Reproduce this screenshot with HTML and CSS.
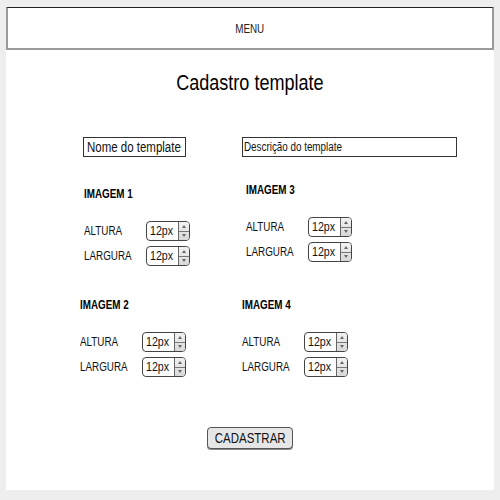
FILE: index.html
```html
<!DOCTYPE html>
<html lang="pt">
<head>
<meta charset="utf-8">
<title>Cadastro template</title>
<link rel="stylesheet" href="styles.css">
</head>
<body>
<div class="frame">
  <header class="menu"><span class="nx nx-c">MENU</span></header>
  <main class="panel">
    <h1 class="title"><span class="nx nx-c">Cadastro template</span></h1>
    <div class="fields">
      <div class="field field-name"><span class="nx">Nome do template</span></div>
      <div class="field field-desc"><span class="nx">Descrição do template</span></div>
    </div>
    <div class="groups">
      <section class="group nudge-top nudge-left">
        <h2 class="group-title"><span class="nx">IMAGEM 1</span></h2>
        <div class="row"><span class="label"><span class="nx">ALTURA</span></span><div class="spin"><span class="spin-val"><span class="nx">12px</span></span><span class="spin-btns"><i class="up"></i><i class="down"></i></span></div></div>
        <div class="row"><span class="label"><span class="nx">LARGURA</span></span><div class="spin"><span class="spin-val"><span class="nx">12px</span></span><span class="spin-btns"><i class="up"></i><i class="down"></i></span></div></div>
      </section>
      <section class="group nudge-left">
        <h2 class="group-title"><span class="nx">IMAGEM 3</span></h2>
        <div class="row"><span class="label"><span class="nx">ALTURA</span></span><div class="spin"><span class="spin-val"><span class="nx">12px</span></span><span class="spin-btns"><i class="up"></i><i class="down"></i></span></div></div>
        <div class="row"><span class="label"><span class="nx">LARGURA</span></span><div class="spin"><span class="spin-val"><span class="nx">12px</span></span><span class="spin-btns"><i class="up"></i><i class="down"></i></span></div></div>
      </section>
      <section class="group">
        <h2 class="group-title"><span class="nx">IMAGEM 2</span></h2>
        <div class="row"><span class="label"><span class="nx">ALTURA</span></span><div class="spin"><span class="spin-val"><span class="nx">12px</span></span><span class="spin-btns"><i class="up"></i><i class="down"></i></span></div></div>
        <div class="row"><span class="label"><span class="nx">LARGURA</span></span><div class="spin"><span class="spin-val"><span class="nx">12px</span></span><span class="spin-btns"><i class="up"></i><i class="down"></i></span></div></div>
      </section>
      <section class="group">
        <h2 class="group-title"><span class="nx">IMAGEM 4</span></h2>
        <div class="row"><span class="label"><span class="nx">ALTURA</span></span><div class="spin"><span class="spin-val"><span class="nx">12px</span></span><span class="spin-btns"><i class="up"></i><i class="down"></i></span></div></div>
        <div class="row"><span class="label"><span class="nx">LARGURA</span></span><div class="spin"><span class="spin-val"><span class="nx">12px</span></span><span class="spin-btns"><i class="up"></i><i class="down"></i></span></div></div>
      </section>
    </div>
    <div class="actions"><button class="btn"><span class="nx nx-c">CADASTRAR</span></button></div>
  </main>
</div>
</body>
</html>
```
FILE: styles.css
```css
* { box-sizing: border-box; }
html, body { margin: 0; padding: 0; }
body {
  background: #eeeeee;
  font-family: "Liberation Sans", Arial, sans-serif;
  color: #111;
  width: 500px;
  height: 500px;
}
/* narrow rendering of Arial-like text */
.nx {
  display: inline-block;
  white-space: nowrap;
  transform: scaleX(0.82);
  transform-origin: left center;
}
.nx-c { transform-origin: center center; }
.frame {
  margin: 7px 6px 0 6px;
  width: 488px;
}
.menu {
  height: 43px;
  background: #fff;
  border: 2px solid #9a9a9a;
  border-top: 1px solid #222;
  display: flex;
  align-items: center;
  justify-content: center;
  font-size: 12px;
  color: #222;
  padding-top: 1px;
}
.panel {
  background: #fff;
  height: 440px;
  padding-top: 21px;
}
.title {
  margin: 0;
  font-weight: normal;
  font-size: 22px;
  line-height: 24px;
  text-align: center;
  color: #000;
}
.fields {
  display: flex;
  gap: 56px;
  margin-top: 42px;
  padding-left: 77px;
}
.field {
  height: 20px;
  border: 1px solid #333;
  font-size: 14px;
  line-height: 18px;
  padding-left: 3px;
  color: #111;
  overflow: hidden;
}
.field-name { width: 103px; }
.field-desc { width: 215px; font-size: 12px; padding-left: 1px; }
.groups {
  display: grid;
  grid-template-columns: 162px 162px;
  row-gap: 32px;
  margin-top: 26px;
  padding-left: 74px;
  align-items: start;
}
.nudge-top { margin-top: 4px; }
.nudge-left { margin-left: 4px; }
.group-title {
  margin: 0 0 20px 0;
  font-size: 12px;
  line-height: 14px;
  font-weight: bold;
  color: #000;
}
.row {
  display: flex;
  align-items: center;
  height: 20px;
}
.row + .row { margin-top: 5px; }
.label {
  width: 62px;
  font-size: 12px;
  color: #111;
}
.spin {
  width: 44px;
  height: 20px;
  border: 1px solid #444;
  border-radius: 4px;
  display: flex;
  overflow: hidden;
  background: #fff;
}
.spin-val {
  flex: 1;
  font-size: 13px;
  line-height: 18px;
  padding-left: 3px;
}
.spin-btns {
  width: 14px;
  border-left: 1px solid #666;
  background: linear-gradient(#f2f2f2, #d8d8d8);
  display: flex;
  flex-direction: column;
}
.spin-btns i {
  flex: 1;
  display: flex;
  align-items: center;
  justify-content: center;
}
.spin-btns i.up { border-bottom: 1px solid #777; }
.spin-btns i.up::before {
  content: "";
  border-left: 2px solid transparent;
  border-right: 2px solid transparent;
  border-bottom: 3px solid #666;
}
.spin-btns i.down::before {
  content: "";
  border-left: 2px solid transparent;
  border-right: 2px solid transparent;
  border-top: 3px solid #666;
}
.actions {
  display: flex;
  justify-content: center;
  margin-top: 50px;
}
.btn {
  width: 86px;
  height: 22px;
  padding: 0;
  border: 1px solid #555;
  border-radius: 4px;
  background: #e6e6e6;
  font-family: inherit;
  font-size: 14px;
  color: #111;
  box-shadow: 0 1px 0 #888;
  display: flex;
  align-items: center;
  justify-content: center;
}
```
